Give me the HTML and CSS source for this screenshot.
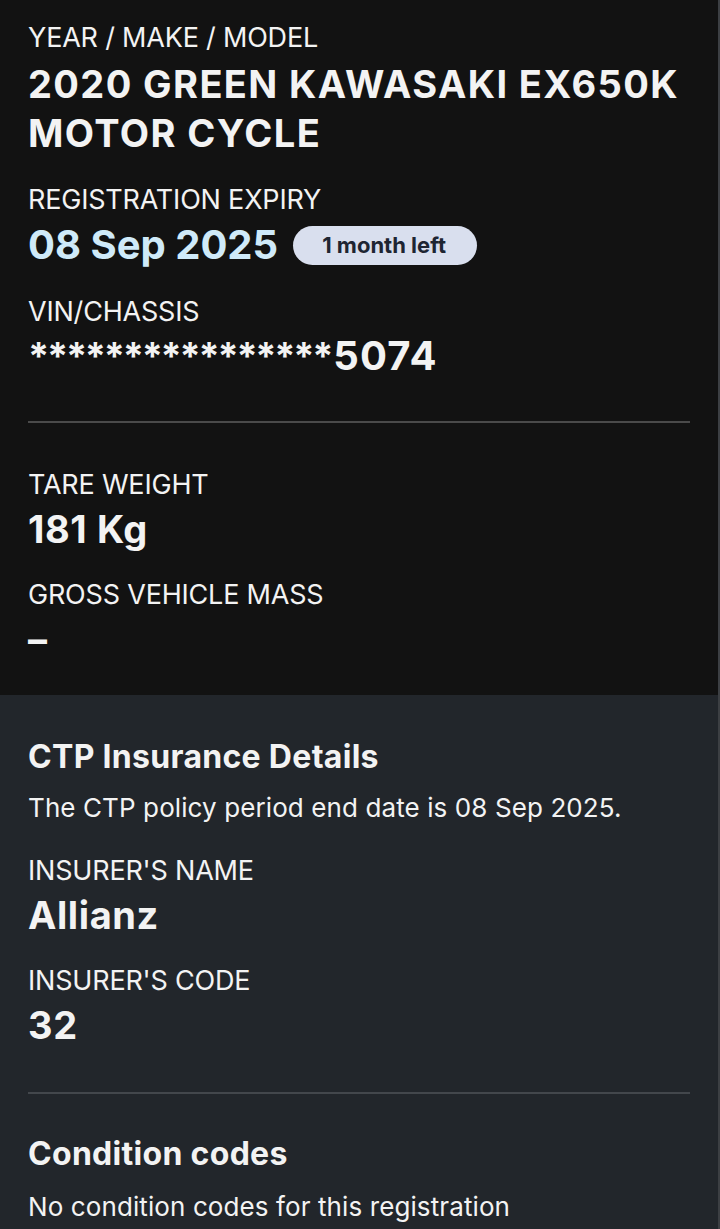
FILE: index.html
```html
<!DOCTYPE html>
<html lang="en">
<head>
<meta charset="utf-8">
<title>Vehicle registration</title>
<link rel="stylesheet" href="styles.css">
</head>
<body>
<main class="page">
  <section class="panel panel-vehicle">
    <div class="label first">YEAR / MAKE / MODEL</div>
    <div class="title">2020 GREEN KAWASAKI EX650K MOTOR CYCLE</div>

    <div class="label gap">REGISTRATION EXPIRY</div>
    <div class="expiry-row">
      <span class="expiry">08 Sep 2025</span>
      <span class="badge">1 month left</span>
    </div>

    <div class="label gap">VIN/CHASSIS</div>
    <div class="value vin"><span class="stars">****************</span><span class="vin-end">5074</span></div>

    <hr class="divider">

    <div class="label after-divider">TARE WEIGHT</div>
    <div class="value">181 Kg</div>

    <div class="label gap">GROSS VEHICLE MASS</div>
    <div class="value">–</div>
  </section>

  <section class="panel panel-ctp">
    <h2 class="heading first-heading">CTP Insurance Details</h2>
    <p class="text">The CTP policy period end date is 08 Sep 2025.</p>

    <div class="label gap-p">INSURER'S NAME</div>
    <div class="value">Allianz</div>

    <div class="label gap">INSURER'S CODE</div>
    <div class="value">32</div>

    <hr class="divider divider-ctp">

    <h2 class="heading after-divider-h">Condition codes</h2>
    <p class="text text-last">No condition codes for this registration</p>
  </section>
</main>
</body>
</html>
```

FILE: styles.css
```css
* { box-sizing: border-box; }
html, body { margin: 0; padding: 0; }
body {
  background: #22262b;
  color: #f3f3f3;
  font-family: "Inter", "Liberation Sans", sans-serif;
  width: 720px;
  height: 1229px;
  overflow: hidden;
}
.page {
  display: flex;
  flex-direction: column;
  border-right: 2px solid #3c3f43;
}
.panel {
  padding: 0 28px;
}
.panel-vehicle {
  background: #121212;
  padding-top: 22px;
  height: 695px;
}
.panel-ctp {
  background: #22262b;
  padding-top: 42px;
  height: 534px;
}
.label {
  font-size: 27px;
  line-height: 32px;
  font-weight: 400;
  letter-spacing: -0.2px;
  margin: 0;
}
.gap { margin-top: 27px; }
.title {
  font-size: 38px;
  line-height: 49px;
  font-weight: 700;
  letter-spacing: 1.4px;
  margin-top: 6px;
  max-width: 680px;
}
.title + .label { margin-top: 26px; }
.expiry-row {
  display: flex;
  align-items: center;
  gap: 15px;
  height: 48px;
  margin-top: 5px;
}
.expiry {
  font-size: 40px;
  line-height: 48px;
  font-weight: 700;
  color: #cfeaf9;
}
.badge {
  display: inline-flex;
  align-items: center;
  height: 39px;
  padding: 0 31px 0 29px;
  border-radius: 20px;
  background: #d9dfee;
  color: #1e2532;
  font-size: 22px;
  font-weight: 700;
}
.value {
  font-size: 38px;
  line-height: 46px;
  font-weight: 700;
  letter-spacing: 0.6px;
  margin-top: 5px;
}
.stars { letter-spacing: -2.3px; }
.vin-end {
  font-size: 40px;
  letter-spacing: 1.2px;
  margin-left: 2px;
}
.divider {
  border: 0;
  height: 2px;
  background: #4a4a4a;
  margin: 42px 0 0;
}
.divider-ctp { background: #43474c; margin-top: 44px; }
.after-divider { margin-top: 46px; }
.heading {
  font-size: 32px;
  line-height: 40px;
  font-weight: 700;
  letter-spacing: 0.3px;
  margin: 0;
}
.after-divider-h { margin-top: 40px; }
.text {
  font-size: 26px;
  line-height: 34px;
  letter-spacing: 0.1px;
  margin: 14px 0 0;
}
.text-last { margin-top: 16px; }
.gap-p { margin-top: 30px; }
```
